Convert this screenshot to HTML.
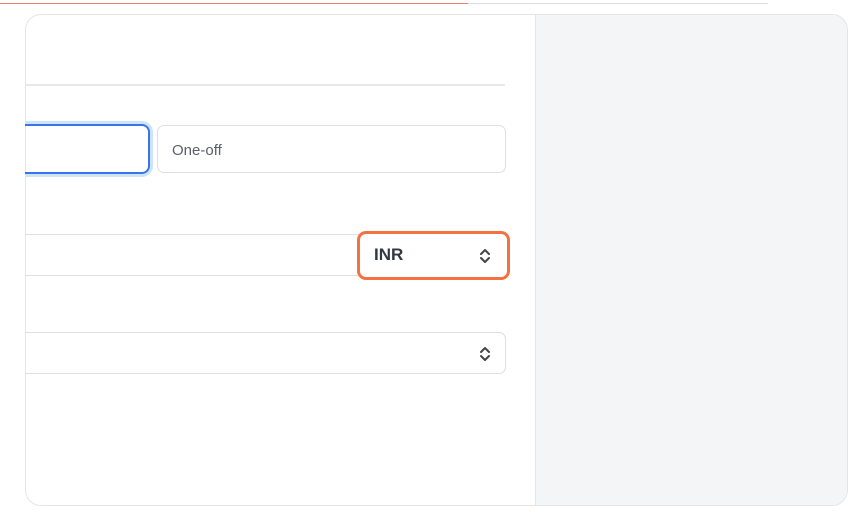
<html><head><style>
body{margin:0;width:856px;height:526px;background:#fff;font-family:"Liberation Sans",sans-serif;position:relative;overflow:hidden}
.a{position:absolute;box-sizing:border-box}
</style></head><body>
<div class="a" style="left:25px;top:14px;width:823px;height:492px;border:1px solid #e3e5e8;border-radius:16px;overflow:hidden">
 <div class="a" style="left:509px;top:0;width:314px;height:492px;background:#f4f5f7;border-left:1px solid #e3e5e8"></div>
</div>
<div class="a" style="left:26px;top:84px;width:479px;height:2px;background:#e6e8eb"></div>
<div class="a" style="left:10px;top:124px;width:140px;height:50px;border:2px solid #3b73e8;border-radius:8px;box-shadow:0 0 0 3px #cbe6f7"></div>
<div class="a" style="left:157px;top:125px;width:349px;height:48px;border:1px solid #dcdfe4;border-radius:7px;padding:16px 0 0 14px;font-size:15px;color:#5a5f6a">One-off</div>
<div class="a" style="left:10px;top:234px;width:496px;height:42px;border:1px solid #dcdfe4;border-radius:7px"></div>
<div class="a" style="left:357px;top:231px;width:153px;height:49px;border:3px solid #f47241;border-radius:9px;background:#fff;padding:11px 0 0 14px;font-size:17px;font-weight:bold;color:#333740">INR
<svg class="a" style="left:118px;top:13px" width="14" height="18" viewBox="0 0 14 18"><path d="M3 7l4-4 4 4M3 11l4 4 4-4" fill="none" stroke="#444" stroke-width="2" stroke-linecap="round" stroke-linejoin="round"/></svg></div>
<div class="a" style="left:10px;top:332px;width:496px;height:42px;border:1px solid #dcdfe4;border-radius:7px">
<svg class="a" style="left:467px;top:12px" width="14" height="18" viewBox="0 0 14 18"><path d="M3 7l4-4 4 4M3 11l4 4 4-4" fill="none" stroke="#444" stroke-width="2" stroke-linecap="round" stroke-linejoin="round"/></svg></div>
<div class="a" style="left:0;top:0;width:25px;height:526px;background:#fff"></div>
<div class="a" style="left:0;top:3px;width:468px;height:1px;background:#e9836a"></div>
<div class="a" style="left:468px;top:3px;width:300px;height:1px;background:#ddd"></div>
</body></html>
